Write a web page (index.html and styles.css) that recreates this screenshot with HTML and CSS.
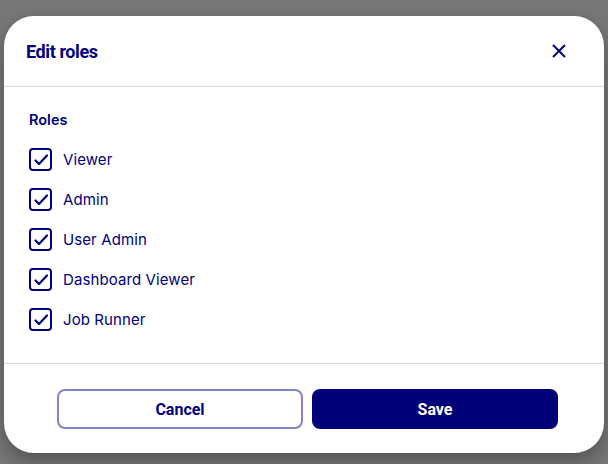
FILE: index.html
```html
<!DOCTYPE html>
<html lang="en">
<head>
<meta charset="utf-8">
<title>Edit roles</title>
<link rel="stylesheet" href="styles.css">
</head>
<body>
<div class="modal">
  <header class="modal-header">
    <h1 class="modal-title">Edit roles</h1>
    <button class="close-btn" aria-label="Close">
      <svg width="14" height="14" viewBox="0 0 14 14"><path d="M1 1 L13 13 M13 1 L1 13" stroke="#000080" stroke-width="2" fill="none"/></svg>
    </button>
  </header>
  <section class="modal-body">
    <div class="group-label">Roles</div>
    <ul class="role-list">
      <li class="role"><span class="box"><svg width="19" height="19" viewBox="0 0 19 19"><path d="M4.5 10.5 L8 14 L16 5.5" stroke="#000080" stroke-width="2.2" fill="none" stroke-linecap="round" stroke-linejoin="round"/></svg></span><span class="role-name">Viewer</span></li>
      <li class="role"><span class="box"><svg width="19" height="19" viewBox="0 0 19 19"><path d="M4.5 10.5 L8 14 L16 5.5" stroke="#000080" stroke-width="2.2" fill="none" stroke-linecap="round" stroke-linejoin="round"/></svg></span><span class="role-name">Admin</span></li>
      <li class="role"><span class="box"><svg width="19" height="19" viewBox="0 0 19 19"><path d="M4.5 10.5 L8 14 L16 5.5" stroke="#000080" stroke-width="2.2" fill="none" stroke-linecap="round" stroke-linejoin="round"/></svg></span><span class="role-name">User Admin</span></li>
      <li class="role"><span class="box"><svg width="19" height="19" viewBox="0 0 19 19"><path d="M4.5 10.5 L8 14 L16 5.5" stroke="#000080" stroke-width="2.2" fill="none" stroke-linecap="round" stroke-linejoin="round"/></svg></span><span class="role-name">Dashboard Viewer</span></li>
      <li class="role"><span class="box"><svg width="19" height="19" viewBox="0 0 19 19"><path d="M4.5 10.5 L8 14 L16 5.5" stroke="#000080" stroke-width="2.2" fill="none" stroke-linecap="round" stroke-linejoin="round"/></svg></span><span class="role-name">Job Runner</span></li>
    </ul>
  </section>
  <footer class="modal-footer">
    <button class="btn btn-secondary">Cancel</button>
    <button class="btn btn-primary">Save</button>
  </footer>
</div>
</body>
</html>
```
FILE: styles.css
```css
html, body {
  margin: 0;
  padding: 0;
}
body {
  background: #777777;
  width: 608px;
  height: 464px;
  overflow: hidden;
  font-family: Inter, "Noto Sans", sans-serif;
  color: #000080;
}
.modal {
  margin: 16px 4px 0 4px;
  width: 600px;
  height: 437px;
  background: #fff;
  border-radius: 30px;
  box-shadow: 0 8px 18px rgba(0, 0, 0, 0.3);
  display: flex;
  flex-direction: column;
  overflow: hidden;
}
.modal-header {
  height: 70px;
  flex: none;
  display: flex;
  align-items: center;
  justify-content: space-between;
  padding: 0 25px 0 22px;
  border-bottom: 1px solid #dcdcdc;
}
.modal-title {
  margin: 0;
  font-family: Roboto, "Liberation Sans", sans-serif;
  font-weight: 700;
  font-size: 18px;
  color: #000080;
  letter-spacing: -0.4px;
}
.close-btn {
  width: 40px;
  height: 40px;
  border: 0;
  background: transparent;
  padding: 0;
  display: flex;
  align-items: center;
  justify-content: center;
  cursor: pointer;
}
.modal-body {
  flex: 1;
  padding: 23px 25px 0 25px;
}
.group-label {
  font-weight: 600;
  font-size: 14.5px;
  line-height: 20px;
  height: 20px;
  margin-bottom: 9px;
}
.role-list {
  list-style: none;
  margin: 0;
  padding: 0;
}
.role {
  height: 40px;
  display: flex;
  align-items: center;
}
.box {
  width: 23px;
  height: 23px;
  box-sizing: border-box;
  border: 2px solid #000080;
  border-radius: 4px;
  display: flex;
  align-items: center;
  justify-content: center;
  margin-right: 11px;
}
.box svg {
  display: block;
}
.role-name {
  font-size: 15px;
  font-weight: 400;
  letter-spacing: 0.1px;
}
.modal-footer {
  height: 90px;
  flex: none;
  box-sizing: border-box;
  border-top: 1px solid #dcdcdc;
  display: flex;
  gap: 9px;
  padding: 25px 46px 0 53px;
}
.btn {
  flex: 1 1 0;
  width: 0;
  box-sizing: border-box;
  height: 40px;
  padding: 0;
  border-radius: 8px;
  border: 2px solid transparent;
  font-family: Roboto, "Liberation Sans", sans-serif;
  font-weight: 700;
  font-size: 16px;
  cursor: pointer;
}
.btn-secondary {
  background: #fff;
  color: #000080;
  border-color: #8585c4;
}
.btn-primary {
  background: #000078;
  color: #fff;
  border-color: #000078;
}
```
